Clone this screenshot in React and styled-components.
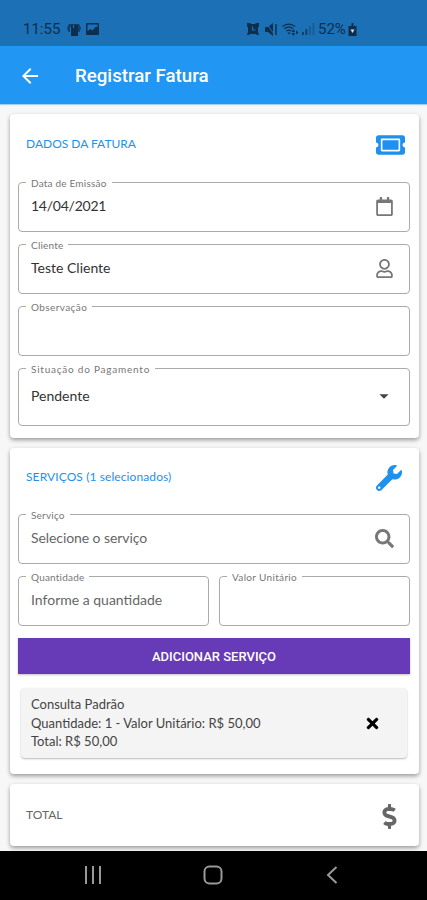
import React from "react";
import styled, { createGlobalStyle } from "styled-components";
import {
  FaDollarSign,
  FaRegCalendar,
  FaRegUser,
  FaSearch,
  FaTicketAlt,
  FaTimes,
  FaWrench,
} from "react-icons/fa";
import { MdArrowBack, MdArrowDropDown } from "react-icons/md";

function StatusBar() {
  return (
    <Status>
      <StatusText $width={40}>11:55</StatusText>
      <StatusIcon $left={4} width="14" height="13" viewBox="0 0 14 13">
        <path d="M4 2h7v11H4z" />
        <path d="M0 5l2-4h10l2 4-1.500 4H11V4H3v5H1.500z" opacity=".75" />
        <path d="M6.500 2v3" stroke="#1c70b5" strokeWidth="1" />
      </StatusIcon>
      <StatusIcon $left={5} width="13" height="12" viewBox="0 0 13 12">
        <path
          fillRule="evenodd"
          d="M1 0h11a1 1 0 0 1 1 1v10a1 1 0 0 1-1 1H1a1 1 0 0 1-1-1V1a1 1 0 0 1 1-1zM1.500 8l3-2 2 1.500 3.500-4 1.500 1V1.500h-10z"
        />
      </StatusIcon>
      <StatusIcon $left={148} width="12" height="12" viewBox="0 0 12 12">
        <path d="M0 0h3l1 1h4l1-1h3v3.500l-1 1V9l1 3h-2l-1-1H3l-1 1H0l1-3V4.500l-1-1z" />
        <path
          d="M5.500 3.500V7h3"
          fill="none"
          stroke="#1c70b5"
          strokeWidth="1.200"
        />
      </StatusIcon>
      <StatusIcon $left={6} width="13" height="13" viewBox="0 0 13 13">
        <path d="M0 4h3l5-4v13L3 9H0z" />
        <path d="M1 0l8 11" stroke="#1c70b5" strokeWidth="1" />
        <path d="M11 1v11" stroke="#0c2f50" strokeWidth="1.500" />
      </StatusIcon>
      <StatusIcon $left={4} width="17" height="13" viewBox="0 0 17 13">
        <g fill="none" stroke="#0c2f50" strokeWidth="1.200">
          <path d="M.5 3.500C4 .2 9.500.2 13 3.500" />
          <path d="M2.500 5.800c2.500-2.200 6-2.200 8.500 0" />
          <path d="M4.500 8c1.400-1.200 3.200-1.200 4.600 0" />
        </g>
        <path d="M5.500 9.500h3L7 11.500zM9.500 9l2-3 1.500 3zM9.500 10H13l-1.500 3zM14 7.500l2.500 2-2.500 2z" />
      </StatusIcon>
      <StatusIcon $left={3} width="13" height="12" viewBox="0 0 13 12">
        <path d="M0 9h1.800v3H0zM3.500 6h1.800v6H3.500z" opacity=".8" />
        <path d="M7 3h1.800v9H7zM10.500 0h1.800v12h-1.800z" opacity=".3" />
      </StatusIcon>
      <StatusText $width={30} $left={3}>
        52%
      </StatusText>
      <StatusIcon width="9" height="13" viewBox="0 0 9 13">
        <path d="M3.500 0h2v3h3v10h-8V3h3z" />
        <path d="M2.500 6.500h4L4.500 10z" fill="#d5e4f2" />
      </StatusIcon>
    </Status>
  );
}

function Field({ label, labelSpacing, value, valueSpacing, placeholder, icon, tall }) {
  return (
    <Outline>
      <Legend $spacing={labelSpacing}>{label}</Legend>
      <FieldBody $tall={tall}>
        <Value $muted={!value} $spacing={valueSpacing}>
          {value || placeholder}
        </Value>
        {icon && <FieldIcon $dark={tall}>{icon}</FieldIcon>}
      </FieldBody>
    </Outline>
  );
}

function App() {
  return (
    <Screen>
      <GlobalStyle />
      <StatusBar />
      <AppBar>
        <MdArrowBack size={24} />
        <Title>Registrar Fatura</Title>
      </AppBar>

      <Content>
        <Card $height={324}>
          <CardHeader $height={62}>
            <CardTitle>DADOS DA FATURA</CardTitle>
            <FaTicketAlt size={26} style={{ width: 29 }} />
          </CardHeader>
          <Fields $top={5.5}>
            <Field
              label="Data de Emissão"
              value="14/04/2021"
              valueSpacing={-0.25}
              icon={<FaRegCalendar size={19} />}
            />
            <Field
              label="Cliente"
              value="Teste Cliente"
              icon={<FaRegUser size={19} />}
            />
            <Field label="Observação" labelSpacing={0.4} />
            <Field
              label="Situação do Pagamento"
              labelSpacing={0.77}
              value="Pendente"
              icon={<MdArrowDropDown size={22} />}
              tall
            />
          </Fields>
        </Card>

        <Card $height={326}>
          <CardHeader $height={60}>
            <CardTitle $spacing={0.1}>SERVIÇOS (1 selecionados)</CardTitle>
            <IconSlot>
              <FaWrench size={26} />
            </IconSlot>
          </CardHeader>
          <Fields $top={6}>
            <Field
              label="Serviço"
              placeholder="Selecione o serviço"
              valueSpacing={-0.08}
              icon={<FaSearch size={19} />}
            />
            <FieldRow>
              <Field label="Quantidade" placeholder="Informe a quantidade" />
              <Field label="Valor Unitário" labelSpacing={0.33} />
            </FieldRow>
          </Fields>
          <AddButton>ADICIONAR SERVIÇO</AddButton>
          <ServiceItem>
            <div>
              <ServiceLine>Consulta Padrão</ServiceLine>
              <ServiceLine>Quantidade: 1 - Valor Unitário: R$ 50,00</ServiceLine>
              <ServiceLine>Total: R$ 50,00</ServiceLine>
            </div>
            <FaTimes size={17} />
          </ServiceItem>
        </Card>

        <Card $height={62}>
          <CardHeader $height={64} $grey>
            <CardTitle>TOTAL</CardTitle>
            <IconSlot>
              <FaDollarSign size={25} />
            </IconSlot>
          </CardHeader>
        </Card>
      </Content>

      <NavBar>
        <svg width="18" height="18" viewBox="0 0 18 18">
          <path d="M2 0v18M9 0v18M16 0v18" />
        </svg>
        <svg width="20" height="20" viewBox="0 0 20 20">
          <rect x="1.500" y="1.500" width="17" height="17" rx="5" />
        </svg>
        <svg width="12" height="18" viewBox="0 0 12 18">
          <path d="M10.500 1L2 9l8.500 8" />
        </svg>
      </NavBar>
    </Screen>
  );
}

const GlobalStyle = createGlobalStyle`
  * {
    box-sizing: border-box;
  }

  body {
    margin: 0;
  }
`;

const Screen = styled.div`
  display: flex;
  flex-direction: column;
  width: 427px;
  height: 900px;
  overflow: hidden;
  background: #f7f7f7;
  font-family: Lato, sans-serif;
`;

const Status = styled.div`
  display: flex;
  align-items: center;
  flex: none;
  height: 46px;
  padding: 12px 0 0 23px;
  background: #1c70b5;
  color: #0c2f50;
`;

const StatusText = styled.span`
  flex: none;
  width: ${({ $width }) => $width}px;
  margin-left: ${({ $left }) => $left || 0}px;
  font-family: Roboto, sans-serif;
  font-size: 15px;
  white-space: nowrap;
`;

const StatusIcon = styled.svg`
  flex: none;
  margin-left: ${({ $left }) => $left || 0}px;
  fill: #0c2f50;
`;

const AppBar = styled.header`
  display: flex;
  align-items: center;
  flex: none;
  gap: 33px;
  height: 58px;
  padding: 1px 18px 0;
  background: #2196f3;
  color: #fff;
  box-shadow: 0 1px 1px #a9cdee;
`;

const Title = styled.h1`
  margin: 0;
  font-family: Roboto, sans-serif;
  font-size: 18.7px;
  font-weight: 500;
`;

const Content = styled.main`
  display: flex;
  flex-direction: column;
  flex: 1;
  gap: 10px;
  min-height: 0;
  padding: 10px 8px 0 10px;
`;

const Card = styled.section`
  flex: none;
  height: ${({ $height }) => $height}px;
  padding: 0 9px 0 8px;
  border-radius: 4px;
  background: #fff;
  box-shadow: 0 2px 4px rgba(0, 0, 0, 0.38);
`;

const CardHeader = styled.div`
  display: flex;
  align-items: center;
  justify-content: space-between;
  height: ${({ $height }) => $height}px;
  padding: 0 5px 0 8px;
  color: ${({ $grey }) => ($grey ? "#666" : "#1e90ee")};
`;

const CardTitle = styled.h2`
  margin: 0 0 3px;
  font-size: 12px;
  font-weight: 400;
  letter-spacing: ${({ $spacing }) => $spacing || 0}px;
`;

const IconSlot = styled.span`
  display: flex;
  justify-content: center;
  width: 32px;
`;

const Fields = styled.div`
  display: flex;
  flex-direction: column;
  gap: 12px;
  padding-top: ${({ $top }) => $top}px;
`;

const FieldRow = styled.div`
  display: grid;
  grid-template-columns: 191px 191px;
  gap: 10px;
`;

const Outline = styled.fieldset`
  min-width: 0;
  margin: 0;
  padding: 0 13px 0 7px;
  border: 1px solid #aaa;
  border-radius: 4px;
`;

const Legend = styled.legend`
  height: 1px;
  padding: 0 5px;
  color: #777;
  font-size: 10px;
  letter-spacing: ${({ $spacing }) => $spacing || 0.2}px;
  line-height: 3px;
`;

const FieldBody = styled.div`
  display: flex;
  align-items: center;
  justify-content: space-between;
  height: ${({ $tall }) => ($tall ? 56 : 48)}px;
  padding-left: 5px;
`;

const Value = styled.span`
  padding-bottom: 3px;
  color: ${({ $muted }) => ($muted ? "#666" : "#333")};
  font-size: 14px;
  letter-spacing: ${({ $spacing }) => $spacing || 0}px;
`;

const FieldIcon = styled.span`
  display: flex;
  justify-content: center;
  width: 24px;
  padding-bottom: 1px;
  color: ${({ $dark }) => ($dark ? "#444" : "#777")};
`;

const AddButton = styled.button`
  display: block;
  width: 100%;
  height: 36px;
  margin-top: 12px;
  border: 0;
  background: #673ab7;
  color: #fff;
  box-shadow: 0 1px 2px rgba(0, 0, 0, 0.25);
  font-family: Roboto, sans-serif;
  font-size: 13px;
  font-weight: 500;
`;

const ServiceItem = styled.div`
  display: flex;
  align-items: center;
  justify-content: space-between;
  height: 70px;
  margin: 14px 3px 0;
  padding: 0 26px 0 10px;
  border-radius: 4px;
  background: #f4f4f4;
  box-shadow: 0 1px 2px rgba(0, 0, 0, 0.28);
`;

const ServiceLine = styled.div`
  color: #444;
  font-size: 13px;
  line-height: 18.5px;
`;

const NavBar = styled.nav`
  display: flex;
  align-items: center;
  flex: none;
  gap: 101px;
  height: 49px;
  padding: 0 0 2px 84px;
  background: #000;

  svg {
    fill: none;
    stroke: #999;
    stroke-width: 2;
  }

  svg:last-child {
    margin-left: 2px;
  }
`;

export default App;
